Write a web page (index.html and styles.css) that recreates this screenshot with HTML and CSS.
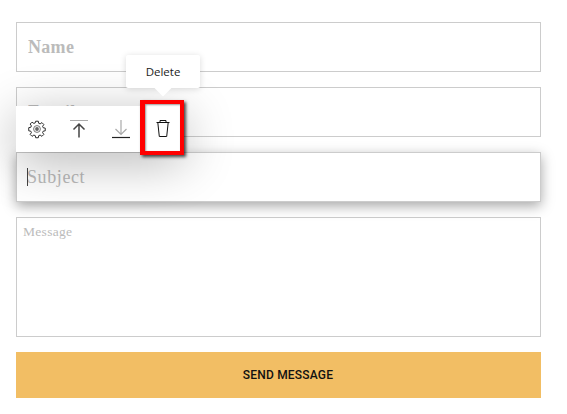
FILE: index.html
```html
<!DOCTYPE html>
<html lang="en">
<head>
    <meta charset="UTF-8">
    <meta name="viewport" content="width=device-width, initial-scale=1.0">
    <title>Contact form</title>
    <link rel="stylesheet" href="styles.css">
</head>
<body>
    <form class="contact-form">
        <input class="field" type="text" placeholder="Name">
        <input class="field" type="text" placeholder="Email">
        <div class="subject-row">
            <input class="field field-active" type="text" placeholder="Subject">
            <span class="caret"></span>
        </div>
        <textarea class="field field-message" placeholder="Message"></textarea>
        <button class="send" type="button">SEND MESSAGE</button>

        <div class="toolbar">
            <button class="tool" type="button" aria-label="Settings">
                <svg width="20" height="20" viewBox="0 0 20 20" fill="none" stroke="#222" stroke-width="1">
                    <path d="M8.6 1.8h2.8l.4 2.2 1.5.6 1.9-1.3 2 2-1.3 1.9.6 1.5 2.2.4v2.8l-2.2.4-.6 1.5 1.3 1.9-2 2-1.9-1.3-1.5.6-.4 2.2H8.6l-.4-2.2-1.5-.6-1.9 1.3-2-2 1.3-1.9-.6-1.5-2.2-.4V8.600l2.2-.4.6-1.5-1.300-1.900 2-2 1.900 1.300 1.500-.6z" transform="translate(.5 .5) scale(.95)"/>
                    <circle cx="10" cy="10" r="3.400" stroke="#777"/>
                    <circle cx="10" cy="10" r="1.900" fill="#666" stroke="none"/>
                </svg>
            </button>
            <button class="tool" type="button" aria-label="Move up">
                <svg width="20" height="20" viewBox="0 0 20 20" fill="none" stroke="#444" stroke-width="1.500">
                    <path d="M1 1.500h18" stroke="#aaa" stroke-width="1"/>
                    <path d="M10 18.500V5M4.500 10.500 10 5l5.500 5.500"/>
                </svg>
            </button>
            <button class="tool" type="button" aria-label="Move down">
                <svg width="20" height="20" viewBox="0 0 20 20" fill="none" stroke="#aaa" stroke-width="1.200">
                    <path d="M10 1v14.500M4.500 10 10 15.500l5.500-5.500"/>
                    <path d="M1 18.500h18" stroke="#222"/>
                </svg>
            </button>
            <button class="tool tool-delete" type="button" aria-label="Delete">
                <svg width="20" height="20" viewBox="0 0 20 20" fill="none" stroke="#111" stroke-width="1">
                    <path d="M3.500 4.500h13M7 4.500V2.500h6v2M4.800 4.500 6.300 18.500h7.400l1.500-14"/>
                </svg>
            </button>
        </div>
        <div class="tooltip">Delete</div>
    </form>
</body>
</html>
```

FILE: styles.css
```css
* {
    box-sizing: border-box;
}

body {
    margin: 0;
    background-color: #fff;
}

.contact-form {
    position: relative;
    display: flex;
    flex-direction: column;
    gap: 15px;
    width: 525px;
    margin: 22px 0 0 16px;
}

.field {
    display: block;
    width: 100%;
    height: 50px;
    padding: 0 11px;
    border: 1px solid #ccc;
    border-radius: 0;
    outline: none;
    background-color: #fff;
    font-family: "Liberation Serif", serif;
    font-size: 18px;
    font-weight: bold;
    letter-spacing: .3px;
}

.field::placeholder {
    color: #bbb;
    opacity: 1;
}

.subject-row {
    position: relative;
}

.field-active {
    padding-left: 10px;
    font-weight: normal;
    letter-spacing: .6px;
    box-shadow: 0 4px 12px rgba(0, 0, 0, 0.35);
}

.caret {
    position: absolute;
    left: 11px;
    top: 16px;
    width: 1px;
    height: 18px;
    background-color: #444;
}

.field-message {
    height: 120px;
    padding: 6px;
    resize: none;
    font-size: 13.500px;
    font-weight: normal;
}

.send {
    height: 46px;
    padding: 0 0 0 19px;
    border: none;
    background-color: #f2be64;
    color: #111;
    font-family: Roboto, sans-serif;
    font-size: 12px;
    font-weight: 500;
    letter-spacing: .2px;
}

.toolbar {
    position: absolute;
    left: 0;
    top: 84px;
    display: flex;
    height: 46px;
    background-color: #fff;
    box-shadow: 0 10px 50px rgba(0, 0, 0, 0.3);
}

.tool {
    display: flex;
    align-items: center;
    justify-content: center;
    width: 42px;
    padding: 0;
    border: none;
    background: none;
}

.tool-delete {
    position: relative;
    z-index: 1;
    width: 44px;
    height: 55px;
    margin: -6px 0 0 -2px;
    border-style: solid;
    border-color: #f00;
    border-width: 4px 4px 4px 5px;
    padding-left: 1px;
    background-color: #fff;
    box-shadow: 2px 2px 3px rgba(0, 0, 0, 0.7), inset 1px 1px 2px rgba(0, 0, 0, 0.4);
}

.tooltip {
    position: absolute;
    left: 110px;
    top: 33px;
    width: 74px;
    height: 33px;
    background-color: #fff;
    border-radius: 2px;
    box-shadow: 0 1px 6px rgba(0, 0, 0, 0.15);
    color: #222;
    font-family: "Open Sans", sans-serif;
    font-size: 11.500px;
    line-height: 33px;
    text-align: center;
}

.tooltip::after {
    content: "";
    position: absolute;
    left: 31px;
    bottom: -6px;
    width: 12px;
    height: 12px;
    background-color: #fff;
    transform: rotate(45deg);
}
```
